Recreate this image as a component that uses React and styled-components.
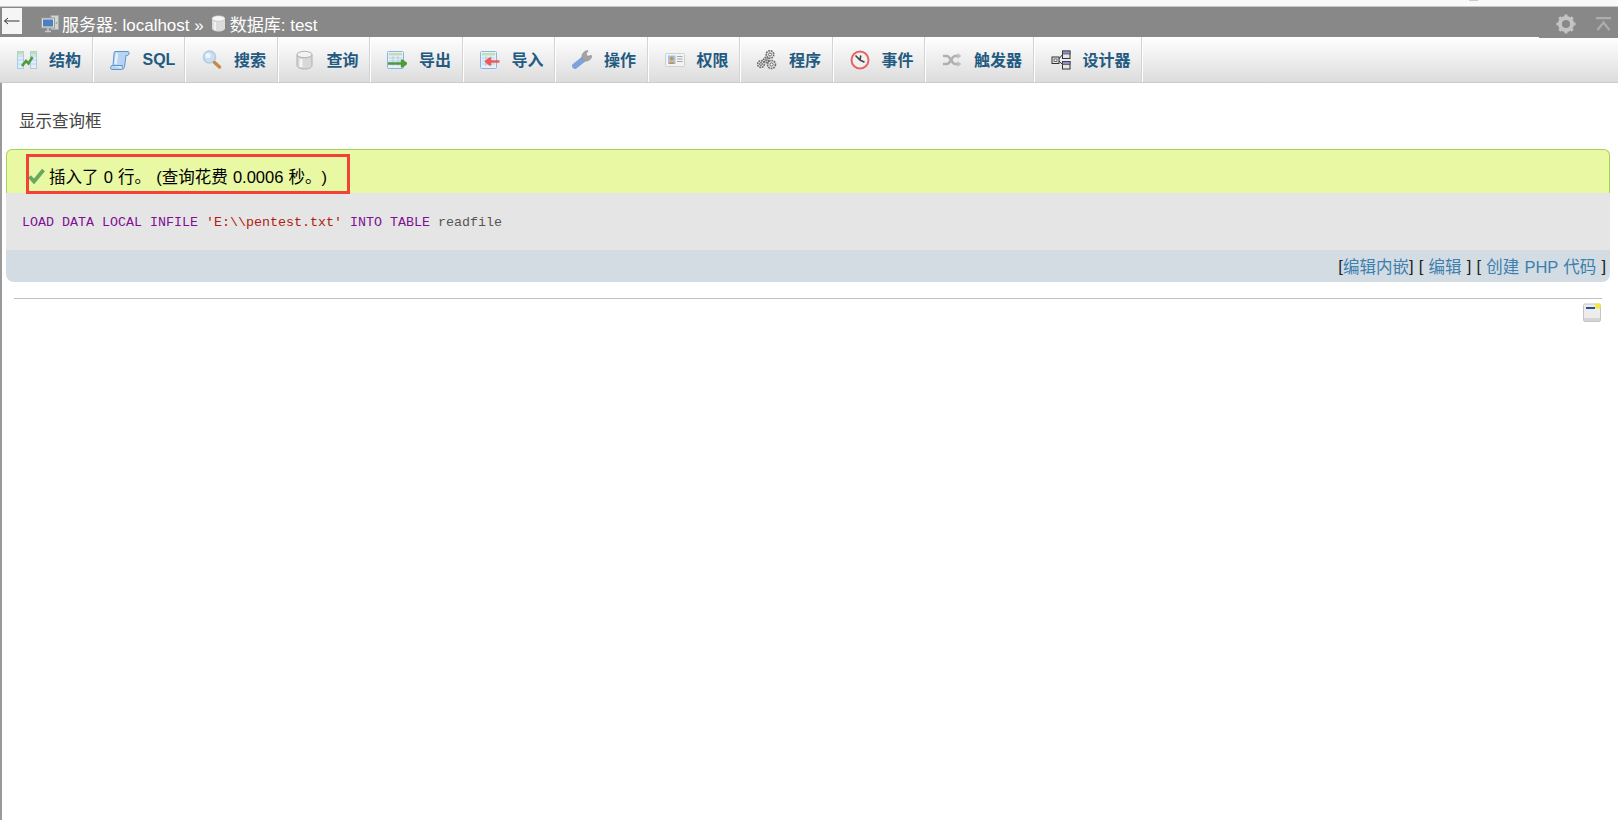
import styled, { createGlobalStyle } from 'styled-components';

const GlobalStyle = createGlobalStyle`
  html, body {
    margin: 0;
    padding: 0;
    background: #fff;
    overflow: hidden;
  }
  body {
    font-family: "Liberation Sans", "Noto Sans CJK SC", sans-serif;
    font-size: 16.5px;
    color: #444;
    text-spacing-trim: space-all;
  }
`;

const Page = styled.div`
  width: 1618px;
  height: 820px;
  display: flex;
  flex-direction: column;
  overflow: hidden;
`;

const TopStrip = styled.div`
  position: relative;
  height: 6px;
  flex: none;
  background: #f9f9f9;
  border-bottom: 1px solid #c8c8c8;

  /* sliver of something cut off by the top edge of the capture */
  &::after {
    content: '';
    position: absolute;
    left: 1469px;
    top: 0;
    width: 9px;
    height: 1px;
    background: #c8ccd2;
  }
`;

const TopBar = styled.div`
  position: relative;
  height: 30px;
  flex: none;
  display: flex;
  align-items: flex-start;
  background: #888;
  color: #fff;
  font-size: 17px;

  /* the bar runs one pixel lower under the two right hand icons */
  &::after {
    content: '';
    position: absolute;
    right: 0;
    bottom: -1px;
    width: 79px;
    height: 1px;
    background: #888;
  }
`;

const BackButton = styled.div`
  width: 20px;
  height: 26px;
  margin: 1px 0 0 2px;
  flex: none;
  display: flex;
  align-items: center;
  justify-content: center;
  background: #f5f5f5;
`;

const Crumbs = styled.div`
  display: flex;
  align-items: center;
  height: 30px;
  margin-left: 19px;
  padding-top: 3px;
  box-sizing: border-box;
  white-space: nowrap;
  flex: 1;
`;

const CrumbIcon = styled.svg`
  flex: none;
  margin-right: ${({ $gap }) => $gap}px;
  filter: blur(0.3px);
`;

const CrumbText = styled.span`
  margin-right: ${({ $gap }) => $gap || 0}px;
`;

const BarIcons = styled.div`
  display: flex;
  align-items: center;
  gap: 20px;
  height: 30px;
  padding: 3px 7px 0 0;
  box-sizing: border-box;
`;

const Main = styled.div`
  flex: 1;
  border-left: 2px solid #9a9a9a;
  display: flex;
  flex-direction: column;
`;

const Tabs = styled.div`
  display: flex;
  height: 46px;
  flex: none;
  box-sizing: border-box;
  margin-left: -2px;
  padding-left: 2px;
  background: linear-gradient(#fff, #dcdcdc);
  border-bottom: 1px solid #ccc;
`;

const Tab = styled.div`
  width: ${({ $wide }) => ($wide ? 108.5 : 92.5)}px;
  flex: none;
  box-sizing: border-box;
  display: flex;
  align-items: center;
  padding-left: 16px;
  margin-left: ${({ $first }) => ($first ? -1 : 0)}px;
  border-right: 1px solid #fff;
  box-shadow: inset -1px 0 0 #d4d4d4;
  color: #235a81;
  font-weight: bold;
  font-size: 16px;
  white-space: nowrap;
`;

const TabLabel = styled.span`
  margin-left: ${({ $latin }) => ($latin ? 1 : 0)}px;
  margin-bottom: ${({ $latin }) => ($latin ? 0 : 2)}px;
`;

const TabIcon = styled.svg`
  width: 20px;
  height: 20px;
  flex: none;
  margin-right: 12px;
  filter: blur(0.3px);
`;

const Content = styled.div`
  flex: 1;
  padding: 0 8px 0 4px;
`;

const QueryToggle = styled.div`
  height: 24px;
  line-height: 24px;
  margin: 26px 0 16px 13px;
  color: #444;
`;

const Message = styled.div`
  position: relative;
  height: 44px;
  box-sizing: border-box;
  display: flex;
  align-items: center;
  padding: 8px 0 0 21px;
  background: #e9f8a2;
  border: 1px solid #a6d25a;
  border-bottom: 0;
  border-radius: 6px 6px 0 0;
  color: #000;
  word-spacing: 0.6px;
`;

const CheckIcon = styled.svg`
  flex: none;
  margin-right: 4px;
  filter: blur(0.3px);
`;

const Annotation = styled.div`
  position: absolute;
  left: 19px;
  top: 4px;
  width: 324px;
  height: 40px;
  box-sizing: border-box;
  border: 3px solid #f4403a;
`;

const SqlBox = styled.div`
  height: 57px;
  box-sizing: border-box;
  display: flex;
  align-items: center;
  padding: 2px 0 0 16px;
  background: #e5e5e5;
  font-family: "Liberation Mono", monospace;
  font-size: 13.33px;
  white-space: pre;
`;

const Keyword = styled.span`
  color: #7f0f96;
`;

const Str = styled.span`
  color: #b01c10;
`;

const Name = styled.span`
  color: #555;
`;

const SqlTools = styled.div`
  height: 32px;
  box-sizing: border-box;
  display: flex;
  align-items: center;
  justify-content: flex-end;
  padding-right: 4px;
  background: #d3dce3;
  border-radius: 0 0 8px 8px;
  color: #222;
  white-space: pre;
  word-spacing: 0.6px;
`;

const ToolLink = styled.a`
  color: #3d7fae;
  text-decoration: none;
`;

const Rule = styled.div`
  height: 1px;
  margin: 16px 8px 0 8px;
  background: #c2c2c2;
`;

const NoteRow = styled.div`
  display: flex;
  justify-content: flex-end;
  padding: 4px 9px 0 0;
`;

const ResultIcon = () => (
  <TabIcon viewBox="0 0 20 20">
    <rect x="0.5" y="1.5" width="6" height="17" fill="#dfeefa" stroke="#a9cbe6" />
    <rect x="13.5" y="1.5" width="6" height="17" fill="#dfeefa" stroke="#a9cbe6" />
    <path d="M1 6h5M1 10h5M1 14h5M14 6h5M14 10h5M14 14h5" stroke="#b8d4ea" />
    <rect x="0.5" y="1.5" width="6" height="3" fill="#bfe0b0" />
    <rect x="13.5" y="1.5" width="6" height="3" fill="#bfe0b0" />
    <path d="M5 16l4-5 2.5 2.5L15.5 7" fill="none" stroke="#4f9a3a" strokeWidth="2.6" />
  </TabIcon>
);

const ScrollIcon = () => (
  <TabIcon viewBox="0 0 20 20">
    <path d="M5 1.500h13c1.500 0 1.500 3.500-.5 4H16l-1.500 11c-.3 2-1.500 3-3 3H2c-2 0-2-4 .5-4H3L4 4c.1-1.500.3-2.500 1-2.500z" fill="#b9d4f2" stroke="#5f93cc" />
    <path d="M3 15.500h9.500c-.5 1.500-.3 3 .3 4" fill="#d8e8f8" stroke="#5f93cc" />
    <path d="M7 3.500L5.500 14" stroke="#e6f1fc" strokeWidth="2.400" />
  </TabIcon>
);

const SearchIcon = () => (
  <TabIcon viewBox="0 0 20 20">
    <circle cx="7.5" cy="7" r="6" fill="#c9def4" stroke="#b4cbe0" strokeWidth="1.600" />
    <circle cx="6" cy="5.500" r="2.600" fill="#eef6fd" />
    <path d="M12.500 12.500l5 4.500" stroke="#c68a4c" strokeWidth="3.400" strokeLinecap="round" />
  </TabIcon>
);

const CylinderIcon = () => (
  <TabIcon viewBox="0 0 20 20">
    <path d="M2 4.500v11c0 1.900 3.300 3.500 7.500 3.500s7.500-1.600 7.500-3.500v-11z" fill="#d8d8d8" stroke="#aeaeae" />
    <ellipse cx="9.500" cy="4.500" rx="7.500" ry="3.200" fill="#f2f2f2" stroke="#aeaeae" />
    <path d="M6 9v8" stroke="#f4f4f4" strokeWidth="3" />
  </TabIcon>
);

const TransferIcon = ({ color, reverse }) => (
  <TabIcon viewBox="0 0 20 20">
    <rect x="0.5" y="1.5" width="16" height="17" rx="1" fill="#e6f0fa" stroke="#8fb4dc" />
    <rect x="2" y="3" width="13" height="2.500" fill="#bfe0b0" />
    <path d="M2 8h13M2 11h13M2 14h13M6 6v10M11 6v10" stroke="#b5cde6" />
    {reverse ? (
      <path d="M19.500 11.500H8M6 11.500l4-3v6z" stroke={color} fill={color} strokeWidth="2.400" strokeLinejoin="round" />
    ) : (
      <path d="M1 13.500h14M19 13.500l-4-3v6z" stroke={color} fill={color} strokeWidth="2.400" strokeLinejoin="round" />
    )}
  </TabIcon>
);

const WrenchIcon = () => (
  <TabIcon viewBox="0 0 20 20">
    <path d="M13 8L3 16" stroke="#7ca3dc" strokeWidth="5.800" strokeLinecap="round" />
    <path d="M10.500 9.500c-1.800-3.500.5-8.500 5-9l.5.4-2 3.100 1.500 2.300 3.800-.9.500.5c-.5 4-5 6.500-8.500 4.500z" fill="#a3a3a3" stroke="#8a8a8a" strokeWidth="0.600" />
  </TabIcon>
);

const CardIcon = () => (
  <TabIcon viewBox="0 0 20 20">
    <rect x="0.5" y="3.500" width="19" height="13" rx="1" fill="#f3f3f3" stroke="#d0d0d0" />
    <rect x="3" y="5.500" width="7.500" height="8.500" fill="#9cc6f0" />
    <circle cx="6.700" cy="8.500" r="1.900" fill="#d9913f" />
    <path d="M3.800 14c0-3 5.800-3 5.800 0z" fill="#d9913f" />
    <path d="M12 6.500h5.500M12 9h5.500M12 11.500h5.500" stroke="#a5a5a5" />
  </TabIcon>
);

const Gear = ({ x, y, r }) => (
  <g>
    <circle cx={x} cy={y} r={r} fill="#e4e4e4" stroke="#6e6e6e" strokeWidth="1.600" strokeDasharray="1.800 0.800" />
    <circle cx={x} cy={y} r={r * 0.4} fill="#fff" stroke="#666" />
  </g>
);

const GearsIcon = () => (
  <TabIcon viewBox="0 0 20 20">
    <Gear x={13} y={4.500} r={3.800} />
    <Gear x={4} y={14} r={3.400} />
    <Gear x={14.500} y={14.500} r={4} />
    <Gear x={9} y={10} r={2.600} />
  </TabIcon>
);

const ClockIcon = () => (
  <TabIcon viewBox="0 0 20 20">
    <circle cx="10" cy="10" r="8.500" fill="#f1f1f1" stroke="#e86464" strokeWidth="2" />
    <path d="M5.500 5.500l4.500 4.500 4.500 2.200M10 10l.8-4.500" fill="none" stroke="#444" strokeWidth="1.600" />
  </TabIcon>
);

const ShuffleIcon = () => (
  <TabIcon viewBox="0 0 20 20">
    <path d="M1 6h4c3 0 5 8 8 8h3M1 14h4c3 0 5-8 8-8h3" fill="none" stroke="#b0b0b0" strokeWidth="2.600" />
    <path d="M15.500 3l3.800 3-3.800 3zM15.500 11l3.800 3-3.800 3z" fill="#c0c0c0" />
  </TabIcon>
);

const DesignerIcon = () => (
  <TabIcon viewBox="0 0 20 20">
    <path d="M7 10l5-6M7 10l5 5" stroke="#333" />
    <rect x="1" y="7" width="7" height="6.500" fill="#e8e8e8" stroke="#333" />
    <rect x="3" y="9" width="3" height="2.500" fill="#fff" stroke="#333" strokeWidth="0.700" />
    <rect x="11.500" y="1" width="7.500" height="7.500" fill="#e8e8e8" stroke="#333" />
    <rect x="11.500" y="1" width="7.500" height="3" fill="#8f8fc8" stroke="#333" strokeWidth="0.600" />
    <rect x="11.500" y="11.500" width="7.500" height="7.500" fill="#e8e8e8" stroke="#333" />
    <rect x="11.500" y="11.500" width="7.500" height="3" fill="#8f8fc8" stroke="#333" strokeWidth="0.600" />
  </TabIcon>
);

const TABS = [
  { label: '结构', icon: <ResultIcon /> },
  { label: 'SQL', icon: <ScrollIcon />, latin: true },
  { label: '搜索', icon: <SearchIcon /> },
  { label: '查询', icon: <CylinderIcon /> },
  { label: '导出', icon: <TransferIcon color="#4f9a3a" /> },
  { label: '导入', icon: <TransferIcon color="#ee5a5a" reverse /> },
  { label: '操作', icon: <WrenchIcon /> },
  { label: '权限', icon: <CardIcon /> },
  { label: '程序', icon: <GearsIcon /> },
  { label: '事件', icon: <ClockIcon /> },
  { label: '触发器', icon: <ShuffleIcon />, wide: true },
  { label: '设计器', icon: <DesignerIcon />, wide: true },
];

export default function App() {
  return (
    <Page>
      <GlobalStyle />
      <TopStrip />
      <TopBar>
        <BackButton>
          <svg width="16" height="8" viewBox="0 0 16 8">
            <path d="M0.5 4H15.5M4 1L0.5 4 4 7" fill="none" stroke="#333" />
          </svg>
        </BackButton>
        <Crumbs>
          <CrumbIcon $gap={3} width="18" height="18" viewBox="0 0 18 18">
            <rect x="10" y="0.5" width="7.500" height="14" fill="#d4d4d4" stroke="#aaa" />
            <rect x="0.5" y="3" width="13" height="10" fill="#e4e4e4" stroke="#999" />
            <rect x="2" y="4.5" width="10" height="7" fill="#4a7fc0" />
            <path d="M4 16.500h6M7 13v3" stroke="#c8c8c8" strokeWidth="1.600" />
            <circle cx="15.500" cy="8" r="0.900" fill="#6c6" />
          </CrumbIcon>
          <CrumbText $gap={7}>服务器: localhost »</CrumbText>
          <CrumbIcon $gap={4} width="15" height="17" viewBox="0 0 15 17">
            <path d="M1 3.500v10c0 1.500 2.800 3 6.500 3s6.500-1.500 6.500-3v-10z" fill="#dcdcdc" />
            <ellipse cx="7.500" cy="3.500" rx="6.500" ry="2.800" fill="#f6f6f6" stroke="#bbb" strokeWidth="0.600" />
            <path d="M4 7v8" stroke="#f2f2f2" strokeWidth="2" />
          </CrumbIcon>
          <CrumbText>数据库: test</CrumbText>
        </Crumbs>
        <BarIcons>
          <svg width="20" height="20" viewBox="0 0 20 20">
            <circle cx="10" cy="10" r="6" fill="none" stroke="#c4c4c4" strokeWidth="4" />
            <path d="M10 0.500v4M10 15.500v4M0.500 10h4M15.500 10h4M3.300 3.300l2.800 2.800M13.900 13.900l2.800 2.800M3.300 16.700l2.800-2.800M13.900 6.100l2.800-2.800" stroke="#c4c4c4" strokeWidth="3" />
          </svg>
          <svg width="15" height="14" viewBox="0 0 15 14">
            <path d="M0 1.200h15M1.500 13L7.500 5.500 13.500 13" fill="none" stroke="#adadad" strokeWidth="2.200" />
          </svg>
        </BarIcons>
      </TopBar>
      <Main>
        <Tabs>
          {TABS.map((tab, index) => (
            <Tab key={tab.label} $wide={tab.wide} $first={index === 0}>
              {tab.icon}
              <TabLabel $latin={tab.latin}>{tab.label}</TabLabel>
            </Tab>
          ))}
        </Tabs>
        <Content>
          <QueryToggle>显示查询框</QueryToggle>
          <Message>
            <CheckIcon width="17" height="17" viewBox="0 0 17 17">
              <path d="M1.500 9.500l4.500 5L15.500 3" fill="none" stroke="#66ab5c" strokeWidth="3.800" />
            </CheckIcon>
            <span>插入了 0 行。 (查询花费 0.0006 秒。)</span>
            <Annotation />
          </Message>
          <SqlBox>
            <Keyword>LOAD DATA LOCAL INFILE </Keyword>
            <Str>'E:\\pentest.txt'</Str>
            <Keyword> INTO TABLE </Keyword>
            <Name>readfile</Name>
          </SqlBox>
          <SqlTools>
            [<ToolLink>编辑内嵌</ToolLink>] [ <ToolLink>编辑</ToolLink> ] [ <ToolLink>创建 PHP 代码</ToolLink> ]
          </SqlTools>
          <Rule />
          <NoteRow>
            <svg width="18" height="19" viewBox="0 0 18 19">
              <rect x="0.500" y="1" width="17" height="17.500" rx="1.500" fill="#ececec" stroke="#c4c4c4" />
              <rect x="1" y="15" width="16" height="3" fill="#d4d4d4" />
              <rect x="3" y="4" width="9" height="2" fill="#2a4f8f" />
              <circle cx="15" cy="3" r="2.800" fill="#f2e93a" />
            </svg>
          </NoteRow>
        </Content>
      </Main>
    </Page>
  );
}
